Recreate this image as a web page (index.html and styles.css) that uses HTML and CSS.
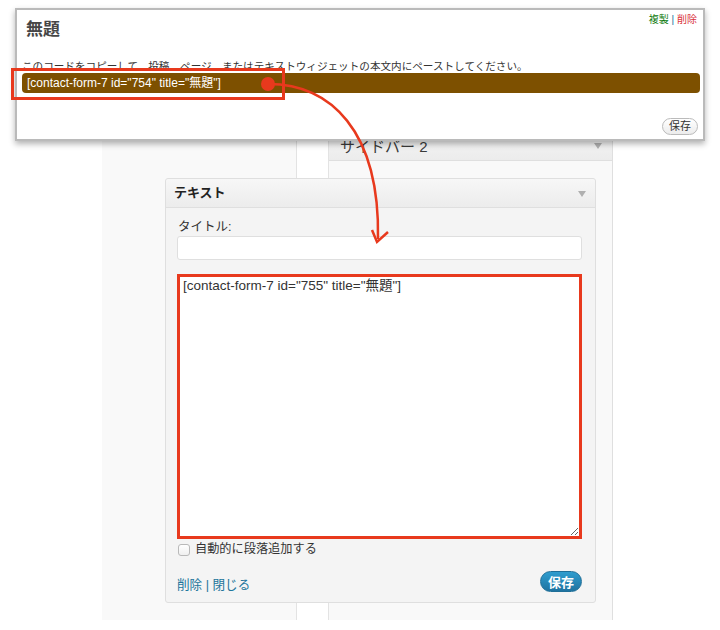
FILE: index.html
```html
<!DOCTYPE html>
<html lang="ja">
<head>
  <meta charset="UTF-8" />
  <meta name="viewport" content="width=device-width, initial-scale=1.0"/>
  <title>ウィジェット</title>
  <link rel="stylesheet" href="styles.css">
</head>
<body>
  <div class="stage">

    <!-- widget admin columns -->
    <div class="admin">
      <div class="col col-left"></div>
      <div class="col col-gap"></div>
      <div class="col col-sidebar">
        <div class="sidebar-head">サイドバー 2<span class="toggle"></span></div>
      </div>
    </div>

    <!-- dragged text widget -->
    <div class="widget">
      <div class="widget-head">テキスト<span class="toggle"></span></div>
      <div class="widget-body">
        <label class="field-label" for="wtitle">タイトル:</label>
        <input class="field" id="wtitle" type="text">
        <textarea class="field content highlight">[contact-form-7 id="755" title="無題"]</textarea>
        <label class="check"><input type="checkbox">自動的に段落追加する</label>
        <div class="widget-foot">
          <div class="links"><a href="#">削除</a> | <a href="#">閉じる</a></div>
          <button class="btn-primary">保存</button>
        </div>
      </div>
    </div>

    <!-- contact form popup -->
    <div class="popup">
      <div class="popup-head">
        <h2 class="popup-title">無題</h2>
        <div class="popup-actions"><a class="copy" href="#">複製</a> | <a class="delete" href="#">削除</a></div>
      </div>
      <p class="popup-desc">このコードをコピーして、投稿、ページ、またはテキストウィジェットの本文内にペーストしてください。</p>
      <div class="popup-code">[contact-form-7 id="754" title="無題"]</div>
      <div class="popup-foot"><button class="btn">保存</button></div>
    </div>

    <!-- annotations -->
    <svg class="marks" width="720" height="630" viewBox="0 0 720 630">
      <rect x="12.5" y="69.5" width="271" height="29" fill="none" stroke="#e8391d" stroke-width="3"/>
      <path d="M268,84 C330,84 380,130 378,239" fill="none" stroke="#e8391d" stroke-width="2.5"/>
      <polyline points="372,230 377,242 388,232" fill="none" stroke="#e8391d" stroke-width="2.5"/>
      <circle cx="268" cy="84" r="7" fill="#e8391d"/>
    </svg>

  </div>
</body>
</html>
```

FILE: styles.css
```css
body {
  margin: 0;
  background-color: #fff;
  color: #333;
  font-family: "Liberation Sans", "Noto Sans CJK JP", sans-serif;
}

.stage {
  position: relative;
  width: 720px;
  height: 630px;
  overflow: hidden;
}

/* columns behind */
.admin {
  display: flex;
  width: 511px;
  height: 492px;
  margin: 128px 0 0 102px;
}

.col-left {
  width: 194px;
  background-color: #f9f9f9;
  border-right: 1px solid #e3e3e3;
}

.col-gap {
  width: 31px;
  background-color: #fff;
  border-right: 1px solid #e3e3e3;
}

.col-sidebar {
  flex: 1;
  background-color: #f9f9f9;
  border-right: 1px solid #dfdfdf;
}

.sidebar-head {
  position: relative;
  height: 33px;
  box-sizing: border-box;
  padding: 10px 0 0 11px;
  background: linear-gradient(#f6f6f6, #ececec);
  border-bottom: 1px solid #dfdfdf;
  color: #3a3a3a;
  font-size: 15px;
  line-height: 18px;
}

.toggle {
  position: absolute;
  width: 0;
  height: 0;
  border-left: 4px solid transparent;
  border-right: 4px solid transparent;
  border-top: 6px solid #b0b0b0;
}

.sidebar-head .toggle {
  right: 10px;
  top: 15px;
}

/* text widget */
.widget {
  position: absolute;
  left: 165px;
  top: 178px;
  width: 431px;
  box-sizing: border-box;
  background-color: #f4f4f4;
  border: 1px solid #dfdfdf;
  border-radius: 3px;
}

.widget-head {
  position: relative;
  height: 28px;
  padding-left: 8px;
  background: linear-gradient(#f7f7f7, #ececec);
  border-bottom: 1px solid #dfdfdf;
  border-radius: 3px 3px 0 0;
  font-size: 13px;
  font-weight: bold;
  line-height: 28px;
  color: #222;
}

.widget-head .toggle {
  right: 9px;
  top: 12px;
}

.widget-body {
  padding: 11px 13px 10px 11px;
  font-size: 13px;
}

.field-label {
  display: block;
  padding-left: 1px;
  font-size: 12.5px;
  line-height: 17px;
  color: #333;
}

.field {
  display: block;
  width: 100%;
  box-sizing: border-box;
  margin: 0;
  background-color: #fff;
  border: 1px solid #dfdfdf;
  border-radius: 3px;
  font-family: inherit;
  font-size: 13px;
  color: #333;
}

input.field {
  height: 24px;
}

.content {
  height: 265px;
  margin-top: 14px;
  padding: 0 3px;
  font-size: 13.5px;
  line-height: 17px;
  resize: vertical;
}

.highlight {
  border: 3px solid #e8391d;
  border-radius: 0;
}

.check {
  display: flex;
  align-items: center;
  height: 13px;
  margin-top: 4px;
  font-size: 12.2px;
  line-height: 13px;
  color: #333;
}

.check input {
  appearance: none;
  width: 12px;
  height: 12px;
  margin: 0 5px 0 1px;
  background: linear-gradient(#fff, #f0f0f0);
  border: 1px solid #b9b9b9;
  border-radius: 3px;
}

.widget-foot {
  display: flex;
  justify-content: space-between;
  align-items: center;
  height: 21px;
  margin-top: 15px;
}

.links {
  padding-top: 3px;
  font-size: 12.6px;
  color: #21759b;
}

.links a {
  color: #21759b;
  text-decoration: none;
}

.btn-primary {
  width: 42px;
  height: 21px;
  padding: 0;
  background: linear-gradient(#2f9dcf, #1f73a0);
  border: 1px solid #1f6f98;
  border-radius: 11px;
  color: #fff;
  font-family: inherit;
  font-size: 13px;
  font-weight: bold;
}

/* popup */
.popup {
  position: absolute;
  left: 15px;
  top: 8px;
  width: 690px;
  box-sizing: border-box;
  padding: 0 3px 6px 5px;
  background-color: #fff;
  border: 2px solid #bababa;
  box-shadow: 0 3px 6px rgba(0,0,0,0.3);
}

.popup-head {
  display: flex;
  justify-content: space-between;
  height: 42px;
}

.popup-title {
  margin: 10px 0 0 4px;
  font-family: "Liberation Serif", "Noto Sans CJK JP", serif;
  font-size: 17px;
  line-height: 20px;
  color: #464646;
}

.popup-actions {
  margin: 4px 3px 0 0;
  font-size: 10px;
  line-height: 12px;
  color: #21759b;
}

.popup-actions a {
  text-decoration: none;
}

.popup-actions .copy {
  color: #0d7a0d;
}

.popup-actions .delete {
  color: #d9303a;
}

.popup-desc {
  margin: 7px 0 0;
  font-size: 10.6px;
  line-height: 14px;
  color: #333;
}

.popup-code {
  height: 20px;
  padding-left: 5px;
  background-color: #7d5000;
  border-radius: 4px;
  color: #fff;
  font-size: 12px;
  line-height: 20px;
}

.popup-foot {
  margin-top: 23px;
  text-align: right;
  height: 17px;
}

.btn {
  width: 36px;
  height: 17px;
  margin-right: 2px;
  padding: 0;
  background: linear-gradient(#fff, #ececec);
  border: 1px solid #bbb;
  border-radius: 9px;
  color: #333;
  font-family: inherit;
  font-size: 11px;
  line-height: 15px;
}

.marks {
  position: absolute;
  left: 0;
  top: 0;
  pointer-events: none;
}
```
